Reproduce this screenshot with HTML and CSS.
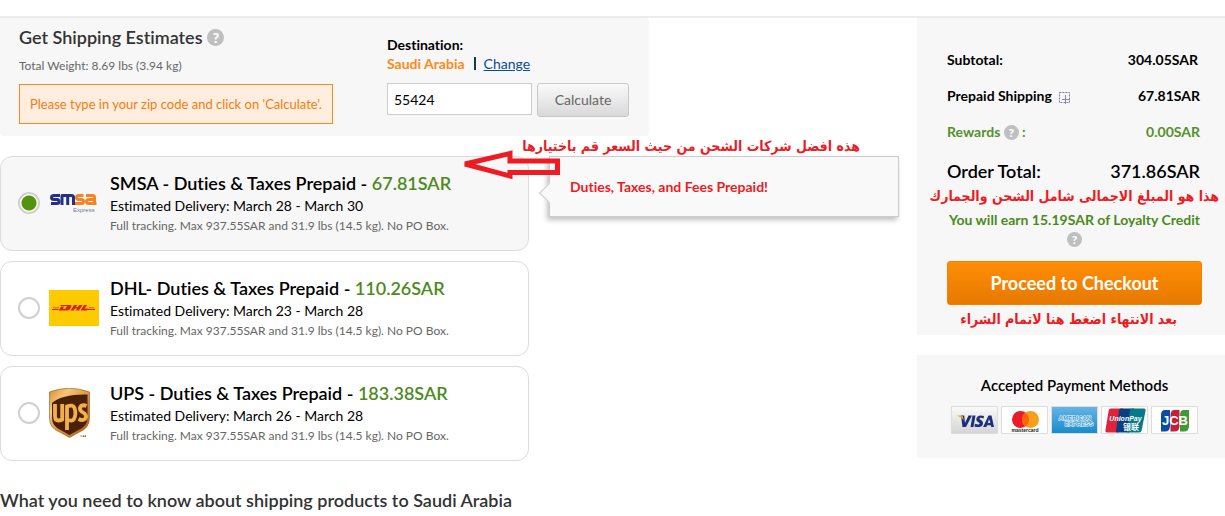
FILE: index.html
```html
<!DOCTYPE html>
<html lang="en">
<head>
<meta charset="utf-8">
<title>Shipping Estimates</title>
<link rel="stylesheet" href="styles.css">
</head>
<body>
<div class="page">
  <main class="main">
    <section class="estimator">
      <div class="estimator-info">
        <h1 class="estimator-title">Get Shipping Estimates <span class="help help-large">?</span></h1>
        <p class="weight">Total Weight: 8.69 lbs (3.94 kg)</p>
        <p class="notice">Please type in your zip code and click on 'Calculate'.</p>
      </div>
      <form class="destination">
        <label class="destination-label" for="zip">Destination:</label>
        <p class="destination-line"><span class="country">Saudi Arabia</span><span class="divider"></span><a href="#change">Change</a></p>
        <div class="zip-row">
          <input class="zip" id="zip" type="text" value="55424">
          <button class="calculate" type="button">Calculate</button>
        </div>
      </form>
    </section>

    <div class="carriers">
      <div class="options">
        <label class="option option-selected">
          <input class="radio" type="radio" name="carrier" checked>
          <svg class="logo" viewBox="0 0 50 50" aria-hidden="true">
            <g fill="none" stroke-width="3" stroke-linejoin="round">
              <g stroke="#262f86">
                <path d="M11 17.500H5q-2.500 0-2.500 2t2.500 2h3q2 0 2 2t-2 2H2"/>
                <path d="M13 27v-9.500h9.500q2 0 2 2V27M18.700 18v9"/>
              </g>
              <g stroke="#f5831f">
                <path d="M34.500 17.500H30q-2.500 0-2.500 2t2.500 2h2.500q2 0 2 2t-2 2H26"/>
                <path d="M37 17.500h6.500q2 0 2 2v6H40q-2.500 0-2.500-2t2.500-2h5M45.500 25.500h2"/>
              </g>
            </g>
            <text class="logo-express" x="24" y="34">Express</text>
          </svg>
          <span class="option-text">
            <span class="option-title">SMSA - Duties &amp; Taxes Prepaid - <b class="price">67.81SAR</b></span>
            <span class="option-date">Estimated Delivery: March 28 - March 30</span>
            <span class="option-note">Full tracking. Max 937.55SAR and 31.9 lbs (14.5 kg). No PO Box.</span>
          </span>
        </label>
        <label class="option">
          <input class="radio" type="radio" name="carrier">
          <svg class="logo" viewBox="0 0 50 50" aria-hidden="true">
            <path fill="#fecb00" d="M0 7h50v36H0z"/>
            <g fill="#d8232a">
              <path d="M3 26h7l-.8 1H3zM4 24.500h6l-.5.800H4zM39 26h7v1h-8zM40 24.500h5l.5.800h-6z"/>
              <path fill-rule="evenodd" d="M12 22h9q2.500 0 1 2.300l-1 1.700q-.8 1.500-3 1.500H9.500l2.700-4h3l-1.400 2.200h2.500l1.700-2.700H11z"/>
              <path d="M25 22h3.300l-1.300 2h2l1.300-2h3.300L30 27.500h-3.300l1.300-2h-2l-1.300 2h-3.200zM35 22h3.200l-2.300 3.500h3.500l-1.300 2h-6.600z"/>
            </g>
          </svg>
          <span class="option-text">
            <span class="option-title">DHL- Duties &amp; Taxes Prepaid - <b class="price">110.26SAR</b></span>
            <span class="option-date">Estimated Delivery: March 23 - March 28</span>
            <span class="option-note">Full tracking. Max 937.55SAR and 31.9 lbs (14.5 kg). No PO Box.</span>
          </span>
        </label>
        <label class="option">
          <input class="radio" type="radio" name="carrier">
          <svg class="logo" viewBox="0 0 50 50" aria-hidden="true">
            <defs>
              <linearGradient id="ups-gold" x1="0" y1="0" x2="1" y2="1">
                <stop offset="0" stop-color="#d98a2b"/><stop offset=".25" stop-color="#f6c877"/><stop offset=".6" stop-color="#d98b2b"/><stop offset="1" stop-color="#a55a17"/>
              </linearGradient>
            </defs>
            <path fill="url(#ups-gold)" stroke="#8a5a25" stroke-width=".6" d="M.5 4Q20-3.500 40.500 4v26q0 10-10 14l-10 5.500-10-5.500Q.5 40 .5 30z"/>
            <path fill="#4b2009" d="M3 15Q13 6 38.500 6.500V30q0 8-9 12l-9 5-9-5Q3 38 3 30z"/>
            <g fill="none" stroke="#f2b04c" stroke-width="3.800">
              <path d="M6 16v12.500q0 4 3.500 4 2 0 3.700-1V16"/>
              <path d="M18 42V18.500q6-2.500 7.500 1.500c1 3 1 8-.5 11q-1.500 2.500-6 1"/>
              <path d="M37.500 18q-3-1.500-5.500 0-2.500 3 .5 5.500l3 2q3 3 .5 5.500-2.500 2-6.500 0"/>
            </g>
            <path stroke="#9a6a45" fill="none" d="M31.500 48h2M34.500 49v-1.500l1 .8 1-.8V49"/>
          </svg>
          <span class="option-text">
            <span class="option-title">UPS - Duties &amp; Taxes Prepaid - <b class="price">183.38SAR</b></span>
            <span class="option-date">Estimated Delivery: March 26 - March 28</span>
            <span class="option-note">Full tracking. Max 937.55SAR and 31.9 lbs (14.5 kg). No PO Box.</span>
          </span>
        </label>
      </div>
      <aside class="callout">
        <span class="callout-tip"></span>
        Duties, Taxes, and Fees Prepaid!
      </aside>
      <p class="remark remark-carrier" lang="ar" dir="rtl">هذه افضل شركات الشحن من حيث السعر قم باختيارها</p>
      <svg class="arrow" viewBox="0 0 100 30" aria-hidden="true">
        <path fill="none" stroke="#ed1c24" stroke-width="5" d="M5 14 50 3.500v7.500h47.500v11.500H50v3.500z"/>
      </svg>
    </div>

    <h2 class="article-title">What you need to know about shipping products to Saudi Arabia</h2>
  </main>

  <aside class="sidebar">
    <section class="summary">
      <dl class="totals">
        <div class="total-row total-row-inset"><dt>Subtotal:</dt><dd>304.05SAR</dd></div>
        <div class="total-row">
          <dt>Prepaid Shipping
            <svg class="expand" viewBox="0 0 12 13" aria-hidden="true"><path fill="none" stroke="#8079ac" stroke-dasharray="2 1" d="M.5 1.500h10v10H.5z"/><path fill="none" stroke="#8c87a8" d="M6.500 4v9M3 8.500h8"/></svg>
          </dt>
          <dd>67.81SAR</dd>
        </div>
        <div class="total-row total-rewards"><dt>Rewards <span class="help">?</span> :</dt><dd>0.00SAR</dd></div>
        <div class="total-row total-order"><dt>Order Total:</dt><dd>371.86SAR</dd></div>
      </dl>
      <p class="remark remark-total" lang="ar" dir="rtl">هذا هو المبلغ الاجمالى شامل الشحن والجمارك</p>
      <p class="loyalty">You will earn 15.19SAR of Loyalty Credit <span class="help">?</span></p>
      <button class="checkout" type="button">Proceed to Checkout</button>
      <p class="remark remark-checkout" lang="ar" dir="rtl">بعد الانتهاء اضغط هنا لاتمام الشراء</p>
    </section>

    <section class="payments">
      <h2 class="payments-title">Accepted Payment Methods</h2>
      <div class="cards">
        <svg class="card" viewBox="0 0 47 28" role="img" aria-label="Visa">
          <defs><linearGradient id="visa-bg" x1="0" y1="0" x2="0" y2="1"><stop offset="0" stop-color="#fafafa"/><stop offset="1" stop-color="#d4d4d4"/></linearGradient></defs>
          <path fill="url(#visa-bg)" stroke="#dcdcdc" d="M.5.5h46v27H.5z"/>
          <g fill="#1b2f7c">
            <path d="M10 9.500h3.200l.8 7.500 3.500-7.500H21L15 21h-3.500z"/>
            <path d="M21.500 9.500h3L22.500 21h-3z"/>
            <path d="M33 10l-.5 2.500q-4-1.500-4 .2c0 1 3.500 1.300 3.500 4.200 0 4.200-5 4.900-8.500 3.500l.5-2.600q4.500 1.600 4.700-.2c.2-1.200-3.400-1.500-3.400-4.300C25.300 9.500 29.500 8.700 33 10z"/>
            <path fill-rule="evenodd" d="M37.500 9.500h3L43 21h-2.800l-.3-1.700h-3.800l-.8 1.700h-3.200zM38 13l-1.200 4h2.600z"/>
          </g>
          <path fill="#f0a020" d="M6 9.500h4.500q1.300 0 1.500 1.500l.7 3.500Q10 11 6 9.500z"/>
        </svg>
        <svg class="card" viewBox="0 0 47 28" role="img" aria-label="Mastercard">
          <path fill="#fff" stroke="#dcdcdc" d="M.5.5h46v27H.5z"/>
          <circle cx="19.500" cy="13.500" r="8.500" fill="#eb1c26"/><circle cx="29.500" cy="13.500" r="8.500" fill="#f79f1a"/>
          <path fill="#ff6508" d="M24.500 6.600a8.500 8.500 0 0 1 0 13.800 8.500 8.500 0 0 1 0-13.800z"/>
          <text class="card-mastercard" x="24" y="26">mastercard</text>
        </svg>
        <svg class="card" viewBox="0 0 47 28" role="img" aria-label="American Express">
          <defs><linearGradient id="amex-bg" x1="0" y1="0" x2="0" y2="1"><stop offset="0" stop-color="#67b4e5"/><stop offset="1" stop-color="#168bcb"/></linearGradient></defs>
          <path fill="url(#amex-bg)" stroke="#dcdcdc" d="M.5.5h46v27H.5z"/>
          <text class="card-amex" x="24" y="13.500">AMERICAN</text><text class="card-amex" x="28" y="20">EXPRESS</text>
        </svg>
        <svg class="card" viewBox="0 0 47 28" role="img" aria-label="UnionPay">
          <path fill="#fff" stroke="#dcdcdc" d="M.5.5h46v27H.5z"/>
          <path fill="#e0233a" d="M10 2.500h12l-5 24H6q-2 0-1.600-2l3.300-20q.3-2 2.300-2z"/>
          <path fill="#0b3e7c" d="M20 2.500h13l-5 24H17q-2.500 0-2-2l3-20q.4-2 2-2z"/>
          <path fill="#08788c" d="M31 2.500h12q2 0 1.600 2l-4 20q-.4 2-2.400 2H28q-2.500 0-2-2l3-20q.3-2 2-2z"/>
          <text class="card-union" x="24.500" y="15">UnionPay</text><text class="card-union-cn" x="30" y="23.500">银联</text>
        </svg>
        <svg class="card" viewBox="0 0 47 28" role="img" aria-label="JCB">
          <path fill="#fff" stroke="#dcdcdc" d="M.5.5h46v27H.5z"/>
          <path fill="#0b4da2" d="M14 4h5v16q0 5.500-5 5.500H10V9q0-5 4-5z"/>
          <path fill="#c4203b" d="M23.500 4h5v16q0 5.500-5 5.500h-4V9q0-5 4-5z"/>
          <path fill="#3f9a35" d="M33 4h5v16q0 5.500-5 5.500h-4V9q0-5 4-5z"/>
          <text class="card-jcb" x="24" y="19">JCB</text>
        </svg>
      </div>
    </section>
  </aside>
</div>
</body>
</html>
```

FILE: styles.css
```css
* { box-sizing: border-box; }

body {
  margin: 0;
  padding-top: 16px;
  background: #fff;
  color: #000;
  font-family: Lato, "Liberation Sans", sans-serif;
  font-size: 14px;
  font-variant-ligatures: none;
  line-height: 20px;
}

h1, h2, p, dl, dd { margin: 0; }

.page {
  display: flex;
  justify-content: space-between;
  align-items: flex-start;
  border-top: 2px solid #ececec;
}

.main { flex: 0 1 899px; }

.estimator {
  display: flex;
  align-items: flex-start;
  justify-content: space-between;
  max-width: 649px;
  padding: 6px 20px 12px 19px;
  background: #f7f7f7;
  border-radius: 0 4px 4px 4px;
}

.estimator-title {
  display: flex;
  align-items: center;
  gap: 5px;
  color: #333;
  font-size: 18px;
  font-weight: 600;
  line-height: 26px;
}

.help {
  display: inline-flex;
  align-items: center;
  justify-content: center;
  width: 15px;
  height: 15px;
  border-radius: 50%;
  background: #bfbfbf;
  color: #fff;
  font-size: 12px;
  font-weight: 900;
  line-height: 15px;
}

.help-large { width: 17px; height: 17px; font-size: 14px; }

.weight {
  margin-top: 5px;
  color: #666;
  font-size: 12px;
  line-height: 22px;
}

.notice {
  margin-top: 7px;
  padding: 9px 10px;
  border: 1px solid #ff8a1c;
  background: #ffeee0;
  color: #f57c0b;
  font-size: 13px;
}

.destination { padding-top: 11px; }

.destination-label { display: block; font-weight: 700; line-height: 19px; }

.destination-line { display: flex; align-items: center; line-height: 19px; }

.country { color: #ff8a15; font-weight: 700; }

.divider { width: 2px; height: 13px; margin: 0 8px 0 9px; background: #123a55; }

a { color: #0b4a9c; }

.zip-row { display: flex; align-items: flex-start; gap: 5px; margin-top: 10px; }

.zip {
  width: 145px;
  height: 32px;
  padding: 0 6px;
  border: 1px solid #ccc;
  background: #fff;
  color: #000;
  font: inherit;
}

.calculate {
  width: 92px;
  height: 34px;
  padding: 0;
  border: 1px solid #c8c8c8;
  border-radius: 3px;
  background: linear-gradient(#fafafa, #d9d9d9);
  color: #666;
  font: inherit;
}

.carriers {
  position: relative;
  display: flex;
  align-items: flex-start;
  gap: 20px;
  margin-top: 20px;
}

.options { flex: 0 1 529px; display: grid; gap: 10px; }

.option {
  display: flex;
  align-items: center;
  min-height: 95px;
  padding: 13px 17px 15px;
  border: 1px solid #dcdcdc;
  border-radius: 12px;
}

.option-selected { background: #f7f7f7; }

.radio {
  appearance: none;
  flex: none;
  width: 22px;
  height: 22px;
  margin: 0;
  border: 2px solid #d0d0d0;
  border-radius: 50%;
  background: #fff;
}

.radio:checked { background: radial-gradient(circle, #55930f 7px, #fff 8px); }

.logo { flex: none; width: 50px; height: 50px; margin: 0 11px 0 9px; }

.logo-express { fill: #74759f; font-family: "Liberation Sans", sans-serif; font-size: 6px; }

.option-text { display: flex; flex-direction: column; padding-top: 1px; }

.option-title { font-size: 18px; font-weight: 600; line-height: 24px; }

.price { color: #4b8a1d; font-weight: 600; }

.option-date { font-size: 14px; line-height: 22px; }

.option-note { color: #666; font-size: 12px; line-height: 18px; }

.callout {
  position: relative;
  flex: 1;
  padding: 20px 20px 19px;
  border: 1px solid #ccc;
  background: #f9f9f9;
  box-shadow: -2px 3px 5px rgba(0, 0, 0, .25);
  color: #ed1c24;
  font-weight: 700;
}

.callout-tip {
  position: absolute;
  top: 29px;
  left: -8px;
  width: 14px;
  height: 14px;
  border: 1px solid #ccc;
  border-width: 0 0 1px 1px;
  background: #f9f9f9;
  transform: rotate(45deg);
}

.remark {
  color: #ed1c24;
  font-family: "DejaVu Sans Condensed", "DejaVu Sans", sans-serif;
  font-size: 14px;
  font-weight: 700;
  line-height: 20px;
  white-space: nowrap;
}

.remark-carrier { position: absolute; top: -20px; right: 39px; }

.arrow { position: absolute; top: -6px; left: 460px; width: 100px; height: 30px; }

.article-title {
  margin-top: 26px;
  color: #333;
  font-size: 18px;
  font-weight: 600;
  line-height: 26px;
}

.sidebar { flex: 0 0 308px; display: grid; gap: 20px; }

.summary { position: relative; min-height: 317px; padding: 32px 23px 5px 30px; background: #f7f7f7; }

.totals { font-weight: 700; }

.total-row { display: flex; justify-content: space-between; margin-bottom: 16px; padding-right: 2px; }

.total-row-inset { padding-right: 4px; }

.expand { width: 12px; height: 13px; margin-left: 4px; vertical-align: -3px; }

.total-rewards { margin-bottom: 17px; color: #55902c; }

.total-order { margin: 0; font-size: 18px; font-weight: 600; line-height: 24px; }

.remark-total, .remark-checkout { position: absolute; }

.remark-total { top: 168px; right: 6px; }

.loyalty { margin-top: 27px; color: #4b8a1d; font-weight: 700; line-height: 19px; text-align: center; }

.checkout {
  display: block;
  width: 100%;
  height: 44px;
  margin-top: 13px;
  padding: 0;
  border: 1px solid #f58200;
  border-radius: 3px;
  background: linear-gradient(#ff8d05, #e67900);
  color: #fff;
  font: inherit;
  font-size: 18px;
  font-weight: 700;
}

.remark-checkout { top: 291px; right: 48px; }

.payments { padding: 19px 23px 24px 30px; background: #f7f7f7; }

.payments-title { font-size: 15px; font-weight: 600; line-height: 22px; text-align: center; }

.cards { display: flex; justify-content: center; gap: 3px; margin-top: 10px; }

.card { width: 47px; height: 28px; }

.card text { font-family: "Liberation Sans", sans-serif; font-weight: 700; text-anchor: middle; }

.card .card-mastercard { fill: #222; font-size: 5px; }
.card .card-amex { fill: #3399d3; stroke: #fff; stroke-width: 1px; paint-order: stroke; font-size: 6px; }
.card .card-union { fill: #fff; font-size: 7px; font-style: italic; }
.card .card-union-cn { fill: #fff; font-family: "Noto Sans CJK SC", sans-serif; font-size: 8px; }
.card .card-jcb { fill: #fff; font-size: 13px; }
```
